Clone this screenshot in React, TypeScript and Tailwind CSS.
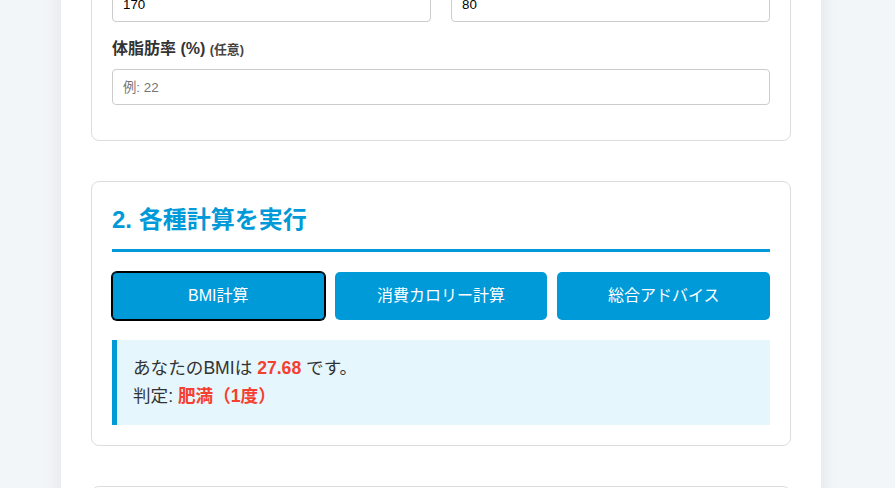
export default function App() {
  return (
    <div className="h-[488px] overflow-hidden bg-[#f2f6f9] text-[#333] font-['Liberation_Sans','Noto_Sans_CJK_JP',sans-serif]">
      <div className="w-[882px]">
        <div className="mx-auto -mt-[137px] w-[760px] bg-white px-[30px] pb-10 shadow-[0_0_20px_rgba(0,0,0,0.08)]">
          <section className="mb-10 rounded-lg border border-[#ddd] p-5">
            <h2 className="mb-5 border-b-[3px] border-[#009ad9] pb-3 text-2xl leading-[35px] font-bold text-[#009ad9]">
              1. 基本情報を入力
            </h2>
            <div className="grid grid-cols-2 gap-5">
              <div className="mb-[15px]">
                <label className="mb-2 block text-base font-bold">身長 (cm)</label>
                <input
                  defaultValue="170"
                  className="block h-9 w-full rounded border border-[#ccc] px-[10px] text-[13.33px] text-black outline-none"
                />
              </div>
              <div className="mb-[15px]">
                <label className="mb-2 block text-base font-bold">体重 (kg)</label>
                <input
                  defaultValue="80"
                  className="block h-9 w-full rounded border border-[#ccc] px-[10px] text-[13.33px] text-black outline-none"
                />
              </div>
            </div>
            <div className="mb-[15px]">
              <label className="mb-2 block text-base font-bold">
                体脂肪率 (%) <span className="text-[12.8px] text-[#444]">(任意)</span>
              </label>
              <input
                placeholder="例: 22"
                className="block h-9 w-full rounded border border-[#ccc] px-[10px] text-[13.33px] text-black outline-none placeholder:text-[#757575]"
              />
            </div>
          </section>

          <section className="mb-10 rounded-lg border border-[#ddd] p-5">
            <h2 className="mb-5 border-b-[3px] border-[#009ad9] pb-3 text-2xl leading-[35px] font-bold text-[#009ad9]">
              2. 各種計算を実行
            </h2>
            <div className="grid grid-cols-3 gap-[10px]">
              <button className="flex h-12 items-center justify-center rounded-[5px] bg-[#009ad9] text-base text-white shadow-[0_0_0_1px_#000,inset_0_0_0_1px_#000]">
                BMI計算
              </button>
              <button className="flex h-12 items-center justify-center rounded-[5px] bg-[#009ad9] text-base text-white">
                消費カロリー計算
              </button>
              <button className="flex h-12 items-center justify-center rounded-[5px] bg-[#009ad9] text-base text-white">
                総合アドバイス
              </button>
            </div>
            <div className="mt-5 border-l-[5px] border-[#009ad9] bg-[#e6f6fd] px-4 py-[15px] text-[17.6px] leading-[27.5px]">
              <p>
                あなたのBMIは <span className="font-bold text-[#f5402f]">27.68</span> です。
              </p>
              <p>
                判定: <span className="font-bold text-[#f5402f]">肥満（1度）</span>
              </p>
            </div>
          </section>

          <section className="rounded-lg border border-[#ddd] p-5">
            <h2 className="mb-5 border-b-[3px] border-[#009ad9] pb-3 text-2xl leading-[35px] font-bold text-[#009ad9]">
              3. 結果
            </h2>
            <div className="h-24" />
          </section>
        </div>
      </div>
    </div>
  );
}
